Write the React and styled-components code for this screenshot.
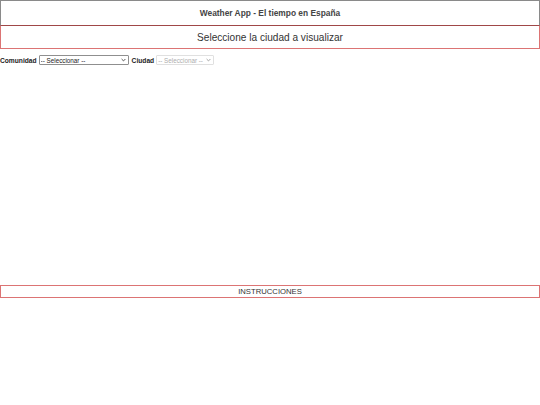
import React from "react";
import styled, { createGlobalStyle } from "styled-components";

const GlobalStyle = createGlobalStyle`
  html, body {
    margin: 0;
    padding: 0;
    background: #fff;
    font-family: "Liberation Sans", Arial, sans-serif;
  }
`;

const Page = styled.div`
  width: 540px;
  display: flex;
  flex-direction: column;
`;

const Header = styled.header`
  height: 24px;
  border: 1px solid #8a8a8a;
  border-bottom-color: #a04848;
  display: flex;
  align-items: center;
  justify-content: center;
  font-weight: bold;
  font-size: 8.4px;
  color: #444;
`;

const Banner = styled.div`
  height: 23px;
  padding-top: 1px;
  box-sizing: border-box;
  border: 1px solid #dc7474;
  border-top: none;
  display: flex;
  align-items: center;
  justify-content: center;
  font-size: 10.1px;
  color: #333;
`;

const Filters = styled.div`
  display: flex;
  align-items: center;
  gap: 2px;
  padding-top: 6px;
  height: 10px;
`;

const Label = styled.label`
  font-size: 6.67px;
  font-weight: bold;
  color: #222;
  margin-left: ${(p) => (p.$spaced ? "1px" : "0")};
`;

const SelectWrap = styled.span`
  position: relative;
  display: inline-flex;
  width: ${(p) => p.$w}px;
  height: 10px;
`;

const Select = styled.select`
  appearance: none;
  font-family: "Liberation Sans", Arial, sans-serif;
  font-size: 6.3px;
  width: 100%;
  height: 100%;
  padding: 0 8px 0 1px;
  margin: 0;
  border: 1px solid ${(p) => (p.disabled ? "#d4d4d4" : "#8f8f8f")};
  border-radius: 1px;
  background: #fff;
  color: ${(p) => (p.disabled ? "#8a8a8a" : "#222")};
  box-sizing: border-box;
`;

const Arrow = styled.svg`
  position: absolute;
  right: 3px;
  top: 3px;
  width: 5px;
  height: 4px;
  pointer-events: none;
`;

const Chevron = ({ color }) => (
  <Arrow viewBox="0 0 5 4">
    <path d="M0.6 1 L2.5 2.9 L4.4 1" fill="none" stroke={color} strokeWidth="0.9" />
  </Arrow>
);

const Content = styled.main`
  height: 220px;
`;

const Instructions = styled.div`
  height: 11px;
  border: 1px solid #dc7474;
  display: flex;
  align-items: center;
  justify-content: center;
  font-size: 7.7px;
  color: #333;
`;

export default function App() {
  return (
    <Page>
      <GlobalStyle />
      <Header>Weather App - El tiempo en España</Header>
      <Banner>Seleccione la ciudad a visualizar</Banner>
      <Filters>
        <Label htmlFor="comunidad">Comunidad</Label>
        <SelectWrap $w={90}>
          <Select id="comunidad" defaultValue="">
            <option value="">-- Seleccionar --</option>
          </Select>
          <Chevron color="#444" />
        </SelectWrap>
        <Label htmlFor="ciudad" $spaced>Ciudad</Label>
        <SelectWrap $w={58}>
          <Select id="ciudad" disabled defaultValue="">
            <option value="">-- Seleccionar --</option>
          </Select>
          <Chevron color="#999" />
        </SelectWrap>
      </Filters>
      <Content />
      <Instructions>INSTRUCCIONES</Instructions>
    </Page>
  );
}
